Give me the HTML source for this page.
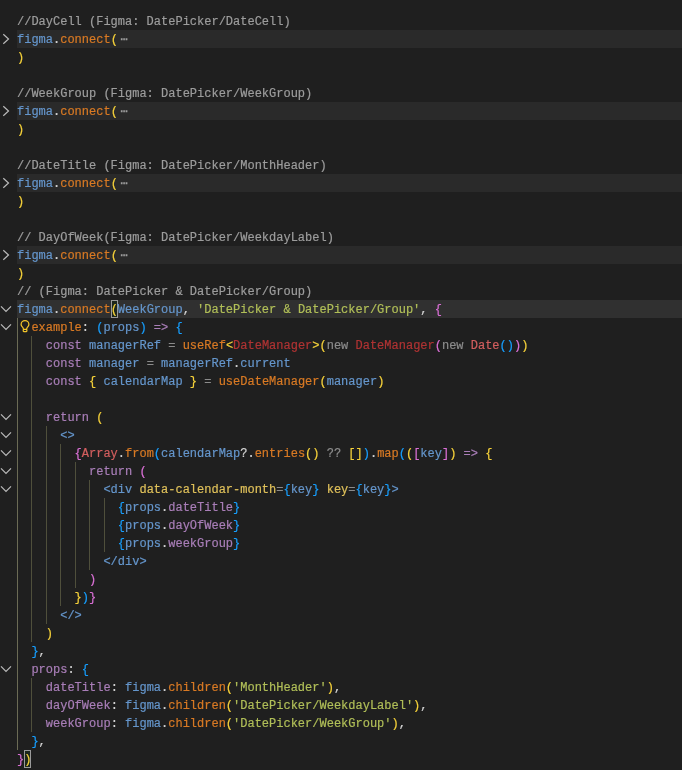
<!DOCTYPE html>
<html><head><meta charset="utf-8"><style>
html,body{margin:0;padding:0;}
body{width:682px;height:770px;background:#1f1f1f;position:relative;overflow:hidden;font-family:"Liberation Mono",monospace;font-size:12px;}
.l{position:absolute;left:17.2px;height:18px;line-height:20px;will-change:transform;-webkit-text-stroke:0.2px currentColor;white-space:pre;color:#d4d4d4;}
.fold{position:absolute;left:17px;right:0;height:18px;background:#2a2a2a;}
.cur{position:absolute;left:17px;right:0;height:18px;background:#303030;}
.gd{position:absolute;width:1px;background:#4f4f3b;}
.ga{position:absolute;width:1px;background:#6b6b55;}
.ic{position:absolute;left:0;}
.bulb{position:absolute;}
.c{color:#9d9d9d}
.v{color:#6596cc}
.f{color:#d97a24}
.p{color:#d4d4d4}
.y{color:#f5d13a}
.ym{color:#f5d13a}
.bm{position:absolute;width:7px;height:18px;box-sizing:border-box;border:1px solid #9a9a9a;background:#1c261c}
.k{color:#da70d6}
.b{color:#179fff}
.s{color:#b1bf58}
.u{color:#a97eb8}
.r{color:#b03333}
.r2{color:#d45f5f}
.n{color:#8c8c8c}

.t{color:#6596cc}
.a{color:#dfc05a}
.e{color:#9d9d9d;margin-left:2.6px}
</style></head><body>
<div class="fold" style="top:30px"></div>
<div class="fold" style="top:102px"></div>
<div class="fold" style="top:174px"></div>
<div class="fold" style="top:246px"></div>
<div class="cur" style="top:300px"></div>
<div class="ga" style="left:17px;top:318px;height:432px"></div>
<div class="gd" style="left:31px;top:336px;height:306px"></div>
<div class="gd" style="left:46px;top:426px;height:198px"></div>
<div class="gd" style="left:60px;top:444px;height:162px"></div>
<div class="gd" style="left:75px;top:462px;height:126px"></div>
<div class="gd" style="left:89px;top:480px;height:90px"></div>
<div class="gd" style="left:104px;top:498px;height:54px"></div>
<div class="gd" style="left:31px;top:678px;height:54px"></div>
<svg class="ic" style="top:30px" width="17" height="18" viewBox="0 0 17 18"><path d="M3.3 4.3 L8.5 9 L3.3 13.7" fill="none" stroke="#bababa" stroke-width="1.2"/></svg>
<svg class="ic" style="top:102px" width="17" height="18" viewBox="0 0 17 18"><path d="M3.3 4.3 L8.5 9 L3.3 13.7" fill="none" stroke="#bababa" stroke-width="1.2"/></svg>
<svg class="ic" style="top:174px" width="17" height="18" viewBox="0 0 17 18"><path d="M3.3 4.3 L8.5 9 L3.3 13.7" fill="none" stroke="#bababa" stroke-width="1.2"/></svg>
<svg class="ic" style="top:246px" width="17" height="18" viewBox="0 0 17 18"><path d="M3.3 4.3 L8.5 9 L3.3 13.7" fill="none" stroke="#bababa" stroke-width="1.2"/></svg>
<svg class="ic" style="top:300px" width="17" height="18" viewBox="0 0 17 18"><path d="M1 6.3 L6 11.5 L11 6.3" fill="none" stroke="#bababa" stroke-width="1.2"/></svg>
<svg class="ic" style="top:318px" width="17" height="18" viewBox="0 0 17 18"><path d="M1 6.3 L6 11.5 L11 6.3" fill="none" stroke="#bababa" stroke-width="1.2"/></svg>
<svg class="ic" style="top:408px" width="17" height="18" viewBox="0 0 17 18"><path d="M1 6.3 L6 11.5 L11 6.3" fill="none" stroke="#bababa" stroke-width="1.2"/></svg>
<svg class="ic" style="top:426px" width="17" height="18" viewBox="0 0 17 18"><path d="M1 6.3 L6 11.5 L11 6.3" fill="none" stroke="#bababa" stroke-width="1.2"/></svg>
<svg class="ic" style="top:444px" width="17" height="18" viewBox="0 0 17 18"><path d="M1 6.3 L6 11.5 L11 6.3" fill="none" stroke="#bababa" stroke-width="1.2"/></svg>
<svg class="ic" style="top:462px" width="17" height="18" viewBox="0 0 17 18"><path d="M1 6.3 L6 11.5 L11 6.3" fill="none" stroke="#bababa" stroke-width="1.2"/></svg>
<svg class="ic" style="top:480px" width="17" height="18" viewBox="0 0 17 18"><path d="M1 6.3 L6 11.5 L11 6.3" fill="none" stroke="#bababa" stroke-width="1.2"/></svg>
<svg class="ic" style="top:660px" width="17" height="18" viewBox="0 0 17 18"><path d="M1 6.3 L6 11.5 L11 6.3" fill="none" stroke="#bababa" stroke-width="1.2"/></svg>
<svg class="bulb" style="left:19px;top:319px" width="12" height="14" viewBox="0 0 12 14"><path d="M4.3 10 L4.3 9.4 C4.3 8.4 2.1 7.4 2.1 5.4 A3.9 3.9 0 0 1 9.9 5.4 C9.9 7.4 7.8 8.4 7.8 9.4 L7.8 10" fill="none" stroke="#f2c52a" stroke-width="1.25"/><rect x="4.25" y="10.4" width="3.6" height="2.1" rx="0.5" fill="none" stroke="#f2c52a" stroke-width="1.25"/></svg>
<div class="bm" style="left:111px;top:300px"></div><div class="bm" style="left:24px;top:750px"></div>
<div class="l" style="top:12px"><span class="c">//DayCell (Figma: DatePicker/DateCell)</span></div>
<div class="l" style="top:30px"><span class="v">figma</span><span class="p">.</span><span class="f">connect</span><span class="y">(</span><span class="e">⋯</span></div>
<div class="l" style="top:48px"><span class="y">)</span></div>
<div class="l" style="top:66px"></div>
<div class="l" style="top:84px"><span class="c">//WeekGroup (Figma: DatePicker/WeekGroup)</span></div>
<div class="l" style="top:102px"><span class="v">figma</span><span class="p">.</span><span class="f">connect</span><span class="y">(</span><span class="e">⋯</span></div>
<div class="l" style="top:120px"><span class="y">)</span></div>
<div class="l" style="top:138px"></div>
<div class="l" style="top:156px"><span class="c">//DateTitle (Figma: DatePicker/MonthHeader)</span></div>
<div class="l" style="top:174px"><span class="v">figma</span><span class="p">.</span><span class="f">connect</span><span class="y">(</span><span class="e">⋯</span></div>
<div class="l" style="top:192px"><span class="y">)</span></div>
<div class="l" style="top:210px"></div>
<div class="l" style="top:228px"><span class="c">// DayOfWeek(Figma: DatePicker/WeekdayLabel)</span></div>
<div class="l" style="top:246px"><span class="v">figma</span><span class="p">.</span><span class="f">connect</span><span class="y">(</span><span class="e">⋯</span></div>
<div class="l" style="top:264px"><span class="y">)</span></div>
<div class="l" style="top:282px"><span class="c">// (Figma: DatePicker &amp; DatePicker/Group)</span></div>
<div class="l" style="top:300px"><span class="v">figma</span><span class="p">.</span><span class="f">connect</span><span class="ym">(</span><span class="v">WeekGroup</span><span class="p">, </span><span class="s">&#x27;DatePicker &amp; DatePicker/Group&#x27;</span><span class="p">, </span><span class="k">{</span></div>
<div class="l" style="top:318px">  <span class="f">example</span><span class="p">: </span><span class="b">(</span><span class="v">props</span><span class="b">)</span> <span class="u">=&gt;</span> <span class="b">{</span></div>
<div class="l" style="top:336px">    <span class="u">const</span> <span class="v">managerRef</span><span class="n"> = </span><span class="f">useRef</span><span class="y">&lt;</span><span class="r">DateManager</span><span class="y">&gt;</span><span class="y">(</span><span class="n">new</span> <span class="r">DateManager</span><span class="k">(</span><span class="n">new</span> <span class="r2">Date</span><span class="b">()</span><span class="k">)</span><span class="y">)</span></div>
<div class="l" style="top:354px">    <span class="u">const</span> <span class="v">manager</span><span class="n"> = </span><span class="v">managerRef</span><span class="p">.</span><span class="v">current</span></div>
<div class="l" style="top:372px">    <span class="u">const</span> <span class="y">{</span> <span class="v">calendarMap</span> <span class="y">}</span><span class="n"> = </span><span class="f">useDateManager</span><span class="y">(</span><span class="v">manager</span><span class="y">)</span></div>
<div class="l" style="top:390px"></div>
<div class="l" style="top:408px">    <span class="u">return</span> <span class="y">(</span></div>
<div class="l" style="top:426px">      <span class="t">&lt;&gt;</span></div>
<div class="l" style="top:444px">        <span class="k">{</span><span class="r2">Array</span><span class="p">.</span><span class="f">from</span><span class="b">(</span><span class="v">calendarMap</span><span class="p">?.</span><span class="f">entries</span><span class="y">()</span><span class="n"> ?? </span><span class="y">[]</span><span class="b">)</span><span class="p">.</span><span class="f">map</span><span class="b">(</span><span class="y">(</span><span class="k">[</span><span class="v">key</span><span class="k">]</span><span class="y">)</span> <span class="u">=&gt;</span> <span class="y">{</span></div>
<div class="l" style="top:462px">          <span class="u">return</span> <span class="k">(</span></div>
<div class="l" style="top:480px">            <span class="t">&lt;div</span> <span class="a">data-calendar-month</span><span class="n">=</span><span class="b">{</span><span class="v">key</span><span class="b">}</span> <span class="a">key</span><span class="n">=</span><span class="b">{</span><span class="v">key</span><span class="b">}</span><span class="t">&gt;</span></div>
<div class="l" style="top:498px">              <span class="b">{</span><span class="v">props</span><span class="p">.</span><span class="u">dateTitle</span><span class="b">}</span></div>
<div class="l" style="top:516px">              <span class="b">{</span><span class="v">props</span><span class="p">.</span><span class="u">dayOfWeek</span><span class="b">}</span></div>
<div class="l" style="top:534px">              <span class="b">{</span><span class="v">props</span><span class="p">.</span><span class="u">weekGroup</span><span class="b">}</span></div>
<div class="l" style="top:552px">            <span class="t">&lt;/div&gt;</span></div>
<div class="l" style="top:570px">          <span class="k">)</span></div>
<div class="l" style="top:588px">        <span class="y">}</span><span class="b">)</span><span class="k">}</span></div>
<div class="l" style="top:606px">      <span class="t">&lt;/&gt;</span></div>
<div class="l" style="top:624px">    <span class="y">)</span></div>
<div class="l" style="top:642px">  <span class="b">}</span><span class="p">,</span></div>
<div class="l" style="top:660px">  <span class="u">props</span><span class="p">: </span><span class="b">{</span></div>
<div class="l" style="top:678px">    <span class="u">dateTitle</span><span class="p">: </span><span class="v">figma</span><span class="p">.</span><span class="f">children</span><span class="y">(</span><span class="s">&#x27;MonthHeader&#x27;</span><span class="y">)</span><span class="p">,</span></div>
<div class="l" style="top:696px">    <span class="u">dayOfWeek</span><span class="p">: </span><span class="v">figma</span><span class="p">.</span><span class="f">children</span><span class="y">(</span><span class="s">&#x27;DatePicker/WeekdayLabel&#x27;</span><span class="y">)</span><span class="p">,</span></div>
<div class="l" style="top:714px">    <span class="u">weekGroup</span><span class="p">: </span><span class="v">figma</span><span class="p">.</span><span class="f">children</span><span class="y">(</span><span class="s">&#x27;DatePicker/WeekGroup&#x27;</span><span class="y">)</span><span class="p">,</span></div>
<div class="l" style="top:732px">  <span class="b">}</span><span class="p">,</span></div>
<div class="l" style="top:750px"><span class="k">}</span><span class="ym">)</span></div>
</body></html>
